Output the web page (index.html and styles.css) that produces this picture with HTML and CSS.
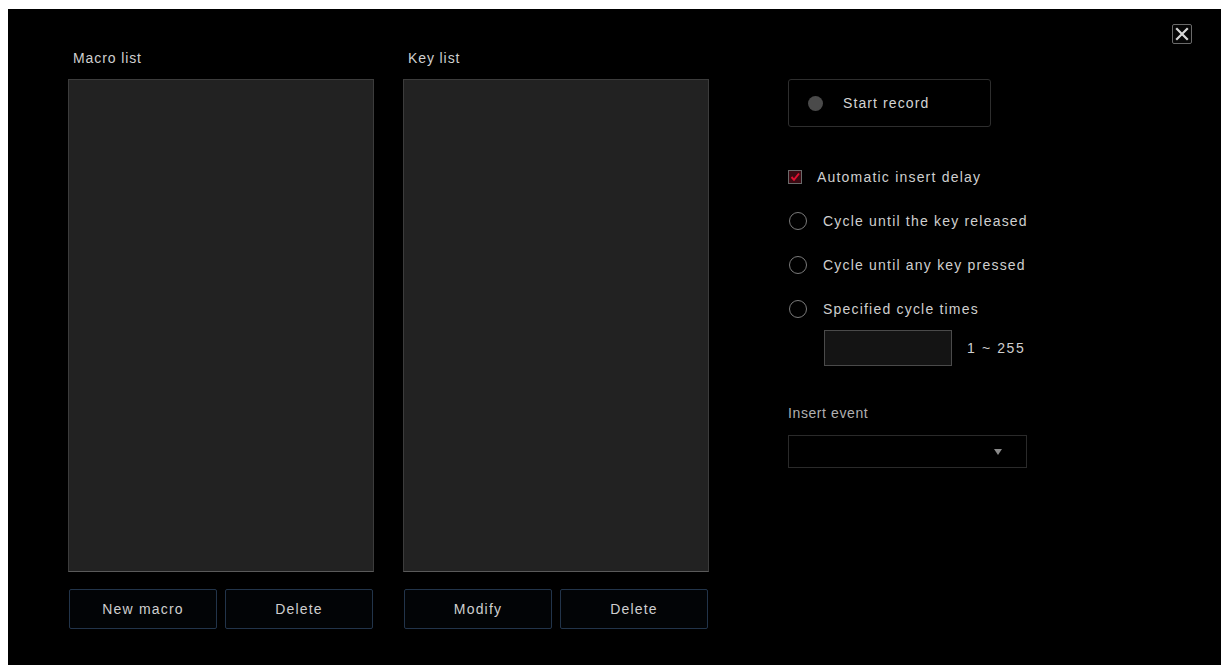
FILE: index.html
```html
<!DOCTYPE html>
<html lang="en">
<head>
<meta charset="utf-8">
<title>Macro settings</title>
<link rel="stylesheet" href="styles.css">
</head>
<body>
<div class="dialog">
  <button class="close" aria-label="Close">
    <svg width="14" height="14" viewBox="0 0 14 14"><path d="M2 2 L12 12 M12 2 L2 12" stroke="#d8d8d8" stroke-width="2.2" stroke-linecap="square"/></svg>
  </button>

  <div class="columns">
    <section class="list-col">
      <div class="col-label">Macro list</div>
      <div class="list-box"></div>
      <div class="btn-row">
        <button class="btn">New macro</button>
        <button class="btn">Delete</button>
      </div>
    </section>

    <section class="list-col">
      <div class="col-label">Key list</div>
      <div class="list-box"></div>
      <div class="btn-row">
        <button class="btn">Modify</button>
        <button class="btn">Delete</button>
      </div>
    </section>

    <section class="options">
      <button class="record"><span class="dot"></span>Start record</button>

      <div class="opt check-row">
        <span class="checkbox">
          <svg width="10" height="10" viewBox="0 0 10 10"><path d="M1.5 5 L4 7.8 L9 1.5" fill="none" stroke="#e01030" stroke-width="2"/></svg>
        </span>
        <span>Automatic insert delay</span>
      </div>
      <div class="opt"><span class="radio"></span><span>Cycle until the key released</span></div>
      <div class="opt"><span class="radio"></span><span>Cycle until any key pressed</span></div>
      <div class="opt"><span class="radio"></span><span>Specified cycle times</span></div>

      <div class="times">
        <div class="num-input"></div>
        <span class="range">1 ~ 255</span>
      </div>

      <div class="event-label">Insert event</div>
      <div class="select"><span class="arrow"></span></div>
    </section>
  </div>
</div>
</body>
</html>
```

FILE: styles.css
```css
html, body {
  background: #fff;
}

body {
  margin: 9px 7px 3px 8px;
  font-family: "Liberation Sans", Arial, sans-serif;
  font-size: 14px;
  color: #cfcfcf;
}

.dialog {
  position: relative;
  height: 656px;
  background: #000;
  box-shadow: 0 0 0 1px #9a9a9a;
  padding: 41px 0 0 60px;
  box-sizing: border-box;
}

.close {
  position: absolute;
  top: 15px;
  right: 29px;
  width: 20px;
  height: 20px;
  padding: 0;
  background: #050505;
  border: 1px solid #6a6a6a;
  border-radius: 2px;
  display: flex;
  align-items: center;
  justify-content: center;
}

.columns {
  display: flex;
  align-items: flex-start;
}

.list-col {
  width: 306px;
  display: flex;
  flex-direction: column;
}

.list-col + .list-col {
  margin-left: 29px;
}

.col-label {
  height: 16px;
  line-height: 16px;
  padding-left: 5px;
  margin-bottom: 13px;
  letter-spacing: 0.9px;
}

.list-box {
  height: 493px;
  background: #222;
  border: 1px solid #3c3c3c;
  border-bottom-color: #5a5a5a;
  box-sizing: border-box;
}

.btn-row {
  display: flex;
  gap: 8px;
  margin-top: 17px;
  padding: 0 1px;
}

.btn {
  flex: 1;
  height: 40px;
  background: #020406;
  border: 1px solid #22344a;
  border-radius: 2px;
  color: #cfcfcf;
  font: inherit;
  letter-spacing: 1.2px;
}

.options {
  margin-left: 79px;
  margin-top: 29px;
  display: flex;
  flex-direction: column;
}

.record {
  width: 203px;
  height: 48px;
  display: flex;
  align-items: center;
  padding: 0 0 0 19px;
  background: #000;
  border: 1px solid #2e2e2e;
  border-radius: 3px;
  color: #d4d4d4;
  font: inherit;
  letter-spacing: 1.1px;
}

.dot {
  width: 15px;
  height: 15px;
  border-radius: 50%;
  background: #4a4a4a;
  margin-right: 20px;
}

.opt {
  display: flex;
  align-items: center;
  height: 20px;
  margin-top: 24px;
  letter-spacing: 1.2px;
  white-space: nowrap;
}

.check-row {
  margin-top: 40px;
}

.checkbox {
  width: 14px;
  height: 14px;
  box-sizing: border-box;
  border: 1px solid #6a6a6a;
  background: #3a0a12;
  display: flex;
  align-items: center;
  justify-content: center;
  margin-right: 15px;
}

.radio {
  width: 18px;
  height: 18px;
  box-sizing: border-box;
  border: 1.5px solid #7a7a7a;
  border-radius: 50%;
  margin: 0 16px 0 1px;
}

.times {
  display: flex;
  align-items: center;
  margin: 11px 0 0 36px;
}

.num-input {
  width: 128px;
  height: 36px;
  box-sizing: border-box;
  background: #141414;
  border: 1px solid #4a4a4a;
}

.range {
  margin-left: 15px;
  letter-spacing: 1.6px;
}

.event-label {
  margin-top: 39px;
  height: 16px;
  line-height: 16px;
  color: #b0b0b0;
  letter-spacing: 0.6px;
}

.select {
  position: relative;
  width: 239px;
  height: 33px;
  margin-top: 14px;
  box-sizing: border-box;
  border: 1px solid #2a2a2a;
  background: #000;
}

.arrow {
  position: absolute;
  right: 24px;
  top: 13px;
  border-left: 4px solid transparent;
  border-right: 4px solid transparent;
  border-top: 6px solid #8a8a8a;
}
```
